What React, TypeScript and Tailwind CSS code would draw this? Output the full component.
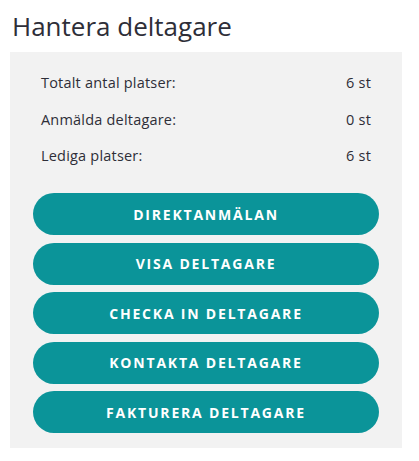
import React from 'react';

const stats = [
  { label: 'Totalt antal platser:', value: '6 st' },
  { label: 'Anmälda deltagare:', value: '0 st' },
  { label: 'Lediga platser:', value: '6 st' },
];

const actions = ['Direktanmälan', 'Visa deltagare', 'Checka in deltagare', 'Kontakta deltagare', 'Fakturera deltagare'];

export default function App() {
  return (
    <div className="bg-white min-h-screen px-[10px] pt-[10px] text-[#2e2e38]" style={{ fontFamily: '"Open Sans", sans-serif' }}>
      <h2 className="text-[26px] leading-[32px] font-normal pl-[2px] mb-[10px]">Hantera deltagare</h2>
      <div className="w-[392px] bg-[#f2f2f2] px-[23px] pt-[13px] pb-[15px]">
        <div className="flex flex-col px-[8px]">
          {stats.map((s) => (
            <div key={s.label} className="flex items-center justify-between h-[36.5px] text-[14.5px] tracking-[0.2px]">
              <span>{s.label}</span>
              <span>{s.value}</span>
            </div>
          ))}
        </div>
        <div className="flex flex-col gap-[7.5px] mt-[18.5px]">
          {actions.map((a) => (
            <button
              key={a}
              className="h-[42px] w-full rounded-full bg-[#0b9499] text-white uppercase font-bold text-[14px] tracking-[1.8px]"
            >
              {a}
            </button>
          ))}
        </div>
      </div>
    </div>
  );
}
